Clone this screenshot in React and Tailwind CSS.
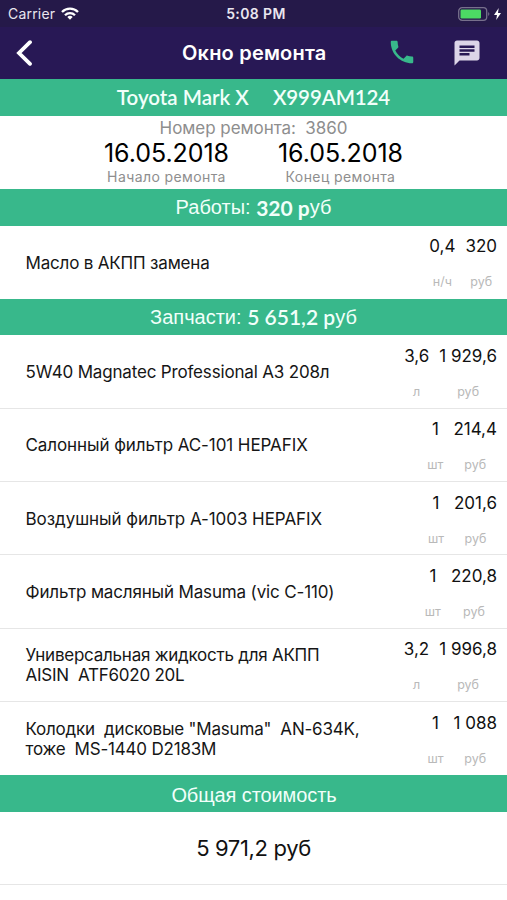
import { MdPhone, MdChat } from 'react-icons/md'

const works = [
  { name: 'Масло в АКПП замена', amount: '0,4', unit: 'н/ч', price: '320', tracking: 'tracking-[-0.18px]' },
]

const parts = [
  { name: '5W40 Magnatec Professional A3 208л', amount: '3,6', unit: 'л', price: '1 929,6', tracking: 'tracking-[-0.17px]' },
  { name: 'Салонный фильтр AC-101 HEPAFIX', amount: '1', unit: 'шт', price: '214,4', tracking: 'tracking-[-0.08px]' },
  { name: 'Воздушный фильтр A-1003 HEPAFIX', amount: '1', unit: 'шт', price: '201,6', tracking: 'tracking-[-0.06px]' },
  { name: 'Фильтр масляный Masuma (vic C-110)', amount: '1', unit: 'шт', price: '220,8', tracking: 'tracking-[-0.15px]' },
  { name: 'Универсальная жидкость для АКПП\nAISIN  ATF6020 20L', amount: '3,2', unit: 'л', price: '1 996,8', tracking: 'tracking-[-0.24px]' },
  { name: 'Колодки  дисковые "Masuma"  AN-634K,\nтоже  MS-1440 D2183M', amount: '1', unit: 'шт', price: '1 088', tracking: 'tracking-[-0.2px]' },
]

function StatusBar() {
  return (
    <div className="grid h-[27px] grid-cols-3 items-center bg-[#251949] text-[14px] text-[#e9e6ef]">
      <div className="flex items-center gap-[6px] pl-[8px]">
        <span className="tracking-[0.2px]">Carrier</span>
        <svg className="h-[13px] w-[18px]" viewBox="0 0 18 13" fill="none" stroke="#fff" strokeWidth="2.3">
          <path d="M1 5 A11.3 11.3 0 0 1 17 5" />
          <path d="M4 8.2 A7 7 0 0 1 14 8.2" />
          <path d="M9 12.8 L6.3 10 A3.9 3.9 0 0 1 11.7 10 Z" fill="#fff" stroke="none" />
        </svg>
      </div>
      <span className="pl-[5px] text-center font-semibold tracking-[0.4px]">5:08 PM</span>
      <div className="flex items-center justify-end gap-[4px] pr-[6px]">
        <svg className="h-[14px] w-[32px]" viewBox="0 0 32 14" fill="none">
          <rect x="0.7" y="0.7" width="28" height="12.6" rx="3.4" stroke="#77708c" strokeWidth="1.3" />
          <rect x="2.5" y="2.5" width="20.5" height="9" rx="1.2" fill="#4cd964" />
          <path d="M30.2 5 Q32.6 7 30.2 9 Z" fill="#77708c" />
        </svg>
        <svg className="h-[12px] w-[7px]" viewBox="0 0 7 12" fill="#fff">
          <path d="M4.7 0 L0 7 H3 L2.2 12 L7 5 H4 Z" />
        </svg>
      </div>
    </div>
  )
}

function Header() {
  return (
    <header className="flex h-[52px] items-center bg-[#281855]">
      <svg className="ml-[16px] h-[26px] w-[17px]" viewBox="0 0 17 26" fill="none" stroke="#fff" strokeWidth="3.8" strokeLinecap="round">
        <path d="M14 2.2 L3 13 L14 23.8" strokeLinejoin="miter" />
      </svg>
      <h1 className="ml-[149px] w-[150px] whitespace-nowrap pb-px text-[20px] font-semibold tracking-[0.2px] text-white">Окно ремонта</h1>
      <MdPhone className="mb-[2px] ml-[55px] size-[30px] text-[#38b88b]" />
      <MdChat className="mb-px ml-[35px] size-[30px] text-[#dcd5e8]" />
    </header>
  )
}

function Bar({ children }) {
  return (
    <div className="flex h-[36.5px] items-center justify-center whitespace-pre bg-[#38b88b] font-['Liberation_Sans',sans-serif] text-[20px] text-[#f1fffa]">
      {children}
    </div>
  )
}

function DateColumn({ date, label }) {
  return (
    <div className="flex w-[174px] flex-col items-center">
      <span className="text-[25px] leading-[29px] tracking-[-0.05px] text-black">{date}</span>
      <span className="text-[14px] leading-[17px] tracking-[0.4px] text-[#8e8e8e]">{label}</span>
    </div>
  )
}

function Value({ value, unit }) {
  return (
    <div className="flex flex-col items-center whitespace-nowrap">
      <span className="text-[17px] leading-[20px] text-[#111]">{value}</span>
      <span className="mt-[18px] text-[12.5px] leading-[16px] text-[#b9b9b9]">{unit}</span>
    </div>
  )
}

function Row({ item, last }) {
  return (
    <div className={`flex h-[73.35px] ${last ? '' : 'border-b border-[#e6e6e6]'}`}>
      <div className={`flex flex-1 items-center whitespace-pre pl-[25.5px] pt-px text-[17px] leading-[20px] text-[#161616] ${item.tracking}`}>
        {item.name}
      </div>
      <div className="flex gap-[10px] pr-[10px] pt-[10.5px]">
        <Value value={item.amount} unit={item.unit} />
        <Value value={item.price} unit="руб" />
      </div>
    </div>
  )
}

export default function App() {
  return (
    <div className="h-[900px] w-[507px] overflow-hidden bg-white font-['Inter',sans-serif]">
      <StatusBar />
      <Header />
      <Bar>
        <div className="flex gap-[24px] font-['Lato',sans-serif] text-[20.5px] font-semibold">
          <span>Toyota Mark X</span>
          <span className="tracking-[-0.1px]">X999AM124</span>
        </div>
      </Bar>
      <section className="flex h-[73.5px] flex-col items-center pt-[2px]">
        <div className="whitespace-pre text-[17px] leading-[21px] tracking-[-0.05px] text-[#8e8e8e]">{'Номер ремонта:  3860'}</div>
        <div className="flex">
          <DateColumn date="16.05.2018" label="Начало ремонта" />
          <DateColumn date="16.05.2018" label="Конец ремонта" />
        </div>
      </section>
      <Bar>
        Работы: <span className="font-['Lato',sans-serif] text-[21px] font-bold">320 р</span>уб
      </Bar>
      {works.map((item) => (
        <Row key={item.name} item={item} last />
      ))}
      <Bar>
        Запчасти: <span className="font-['Lato',sans-serif] text-[21px] font-semibold">5 651,2 р</span>уб
      </Bar>
      {parts.map((item, i) => (
        <Row key={item.name} item={item} last={i === parts.length - 1} />
      ))}
      <Bar>
        <span className="pt-[2px] pl-px tracking-[-0.1px]">Общая стоимость</span>
      </Bar>
      <div className="flex h-[73.5px] items-center justify-center border-b border-[#e6e6e6] text-[22px] tracking-[-0.35px] text-[#111]">5 971,2 руб</div>
    </div>
  )
}
